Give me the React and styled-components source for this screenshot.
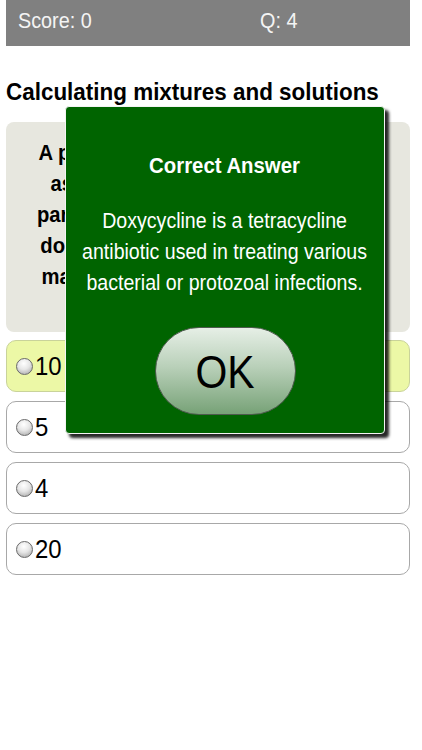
import React from "react";
import styled, { createGlobalStyle } from "styled-components";

const GlobalStyle = createGlobalStyle`
  html, body {
    margin: 0;
    padding: 0;
    background: #ffffff;
  }
  body {
    font-family: "Liberation Sans", Arial, sans-serif;
  }
`;

const Page = styled.div`
  position: relative;
  width: 422px;
  height: 750px;
  overflow: hidden;
`;

const Screen = styled.div`
  display: flex;
  flex-direction: column;
  width: 404px;
  margin-left: 6px;
`;

/* the app's font is a narrow Helvetica, so text is squeezed horizontally */
const Narrow = styled.span`
  display: inline-block;
  white-space: nowrap;
  transform: scaleX(${(p) => p.$k || 0.91});
  transform-origin: ${(p) => (p.$center ? "center" : "left")} center;
`;

const TopBar = styled.div`
  display: grid;
  grid-template-columns: 242px 1fr;
  align-items: center;
  height: 46px;
  box-sizing: border-box;
  padding: 0 0 4px 12px;
  background: #808080;
  color: #f4f4f4;
  font-size: 22px;
`;

const Title = styled.h1`
  margin: 32px 0 0;
  font-size: 24px;
  line-height: 28px;
  font-weight: bold;
  color: #000;
`;

const QuestionBox = styled.div`
  display: flex;
  justify-content: center;
  margin-top: 16px;
  height: 210px;
  box-sizing: border-box;
  padding-top: 15px;
  border-radius: 8px;
  background: #e7e7df;
  text-align: center;
  font-size: 22px;
  line-height: 31px;
  font-weight: bold;
  color: #000;
`;

const Options = styled.div`
  display: flex;
  flex-direction: column;
  gap: 9px;
  margin-top: 8px;
`;

const Option = styled.div`
  display: flex;
  align-items: center;
  gap: 2px;
  height: 52px;
  box-sizing: border-box;
  padding-left: 9px;
  border: 1px solid ${(p) => (p.$picked ? "#c9d39a" : "#a8a8a8")};
  border-radius: 10px;
  background: ${(p) => (p.$picked ? "#ecf8a6" : "#ffffff")};
  font-size: 26px;
  color: #000;
`;

const Radio = styled.span`
  flex-shrink: 0;
  width: 17px;
  height: 17px;
  box-sizing: border-box;
  border-radius: 50%;
  border: 1px solid #6a6a6a;
  background: radial-gradient(circle at 45% 30%, #ffffff 0%, #e6e6e6 45%, #9e9e9e 100%);
`;

const Modal = styled.div`
  position: absolute;
  left: 65px;
  top: 106px;
  width: 320px;
  height: 328px;
  box-sizing: border-box;
  display: flex;
  flex-direction: column;
  align-items: center;
  padding-top: 44px;
  border: 1px solid #f4f4f4;
  border-radius: 4px;
  background: #006400;
  box-shadow: 4px 4px 3px rgba(0, 0, 0, 0.85);
  color: #ffffff;
  text-align: center;
`;

const ModalTitle = styled.div`
  flex-shrink: 0;
  font-size: 22px;
  line-height: 30px;
  font-weight: bold;
`;

const ModalText = styled.div`
  flex-shrink: 0;
  margin-top: 25px;
  font-size: 21.5px;
  line-height: 31px;
`;

const OkButton = styled.button`
  flex-shrink: 0;
  margin-top: 28px;
  width: 141px;
  height: 88px;
  border: 1px solid #4e5a4e;
  border-radius: 44px;
  background: linear-gradient(#e6efe6 0%, #b9d0b9 45%, #77a277 100%);
  font-family: inherit;
  font-size: 47px;
  color: #000;
  cursor: pointer;
  padding: 0;
`;

const options = [
  { label: "10", picked: true },
  { label: "5" },
  { label: "4" },
  { label: "20" },
];

export default function App() {
  return (
    <Page>
      <GlobalStyle />
      <Screen>
        <TopBar>
          <Narrow $k={0.9}>Score: 0</Narrow>
          <Narrow $k={0.9}>Q: 4</Narrow>
        </TopBar>
        <Title>
          <Narrow $k={0.935}>Calculating mixtures and solutions</Narrow>
        </Title>
        <QuestionBox>
          <Narrow $center $k={0.92}>
            A patient weighing 50 kg is ordered
            <br />
            as a single loading dose 2 mg/kg
            <br />
            parenteral doxycycline. If the vial of
            <br />
            doxycycline contains 8 mg per mL,
            <br />
            many mL should be administered?
          </Narrow>
        </QuestionBox>
        <Options>
          {options.map((o) => (
            <Option key={o.label} $picked={o.picked}>
              <Radio />
              <Narrow $k={0.92}>{o.label}</Narrow>
            </Option>
          ))}
        </Options>
      </Screen>
      <Modal>
        <ModalTitle>
          <Narrow $center $k={0.925}>Correct Answer</Narrow>
        </ModalTitle>
        <ModalText>
          <Narrow $center $k={0.91}>
            Doxycycline is a tetracycline
            <br />
            antibiotic used in treating various
            <br />
            bacterial or protozoal infections.
          </Narrow>
        </ModalText>
        <OkButton>
          <Narrow $center $k={0.87}>OK</Narrow>
        </OkButton>
      </Modal>
    </Page>
  );
}
